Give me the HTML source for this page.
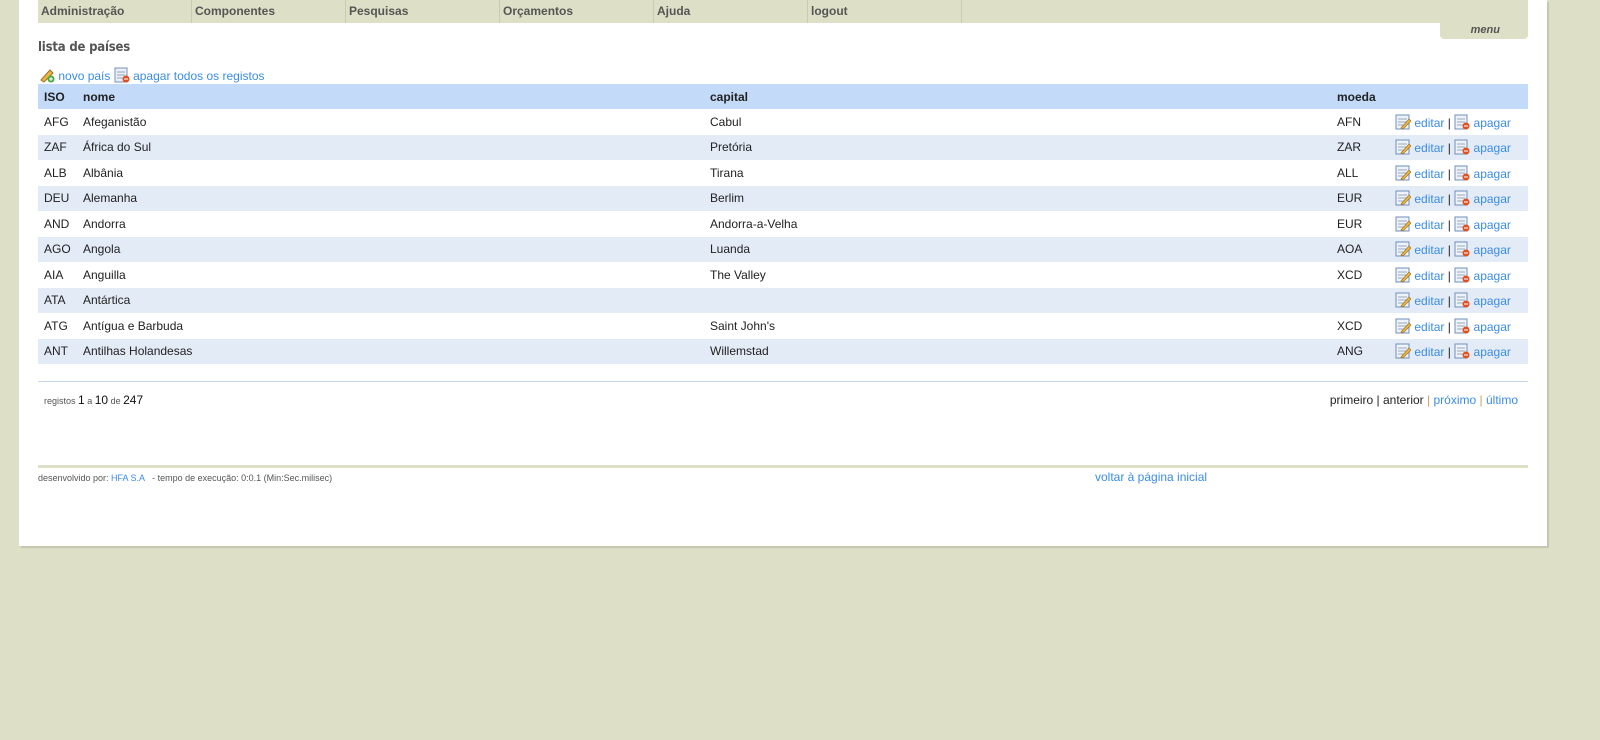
<!DOCTYPE html>
<html><head><meta charset="utf-8"><style>
*{margin:0;padding:0;box-sizing:border-box}
body{width:1600px;height:740px;background:#dde0c6;font-family:"Liberation Sans",Arial,sans-serif;font-size:12px;color:#222;position:relative;overflow:hidden}
.panel{position:absolute;left:19px;top:0;width:1528px;height:546px;background:#fff;box-shadow:2px 2px 1px #c3c6ad}
.menu{position:absolute;left:38px;top:0;width:1490px;height:23px;background:#dde0c6}
.menu div{float:left;width:154px;height:23px;border-right:1px solid #c9ccb2;padding:4px 0 0 3px;font-weight:bold;color:#555;font-size:12px}
.tab{position:absolute;left:1440px;top:23px;width:88px;height:16px;background:#dde0c6;border-radius:0 0 4px 4px;font-style:italic;font-weight:bold;color:#555;font-size:11px;text-align:right;padding:1px 28px 0 0}
h1{position:absolute;left:38px;top:40px;font-size:13px;font-weight:bold;color:#555;font-family:"DejaVu Sans Condensed","Liberation Sans",sans-serif;letter-spacing:-0.2px}
a{color:#3a8ce8;text-decoration:none}
.tools{position:absolute;left:39px;top:67px;font-size:12px}
.ic{display:inline-block;width:16px;height:16px;vertical-align:-3px}
table{position:absolute;left:38px;top:84px;width:1490px;border-collapse:collapse}
td,th{height:25.5px;padding:0 0 0 6px;text-align:left;font-size:12px;vertical-align:middle}
th{background:#c4daf9;font-weight:bold;color:#222;height:25px}
tr:nth-child(odd) td{background:#e3ebf7}
.sep{position:absolute;left:38px;top:381px;width:1490px;height:1px;background:#c9d7ee}
.reg{position:absolute;left:44px;top:393px;font-size:9px;color:#555}
.reg b{font-weight:normal;font-size:12px;color:#111}
.pag{position:absolute;right:82px;top:393px;font-size:12px;color:#222}
.pag span{color:#c8a060}
.fl{position:absolute;left:38px;top:465px;width:1490px;height:3px;background:#dde0c6}
.ft{position:absolute;left:38px;top:473px;font-size:9px;color:#555}
.home{position:absolute;left:1095px;top:470px;font-size:12px}
</style></head><body>
<div class="panel"></div>
<div class="menu"><div>Administração</div><div>Componentes</div><div>Pesquisas</div><div>Orçamentos</div><div>Ajuda</div><div>logout</div></div>
<div class="tab">menu</div>
<h1>lista de países</h1>
<div class="tools"><svg class="ic" viewBox="0 0 16 16"><path d="M2 13 L11 3 L14 6 L5 15 Z" fill="#e8b848" stroke="#a07020"/><circle cx="12" cy="12" r="3.5" fill="#4a4"/><path d="M10 12h4M12 10v4" stroke="#fff"/></svg> <a>novo país</a> <svg class="ic" viewBox="0 0 16 16"><rect x="1" y="1" width="12" height="14" fill="#eef" stroke="#7890b0"/><path d="M3 5h8M3 8h8M3 11h6" stroke="#8aa"/><circle cx="12" cy="12" r="3.5" fill="#e05020"/><path d="M10 12h4" stroke="#fff"/></svg> <a>apagar todos os registos</a></div>
<table>
<tr><th style="width:39px">ISO</th><th style="width:627px">nome</th><th style="width:627px">capital</th><th style="width:60px">moeda</th><th></th></tr>
<tr><td>AFG</td><td>Afeganistão</td><td>Cabul</td><td>AFN</td><td class="a"></td></tr>
<tr><td>ZAF</td><td>África do Sul</td><td>Pretória</td><td>ZAR</td><td class="a"></td></tr>
<tr><td>ALB</td><td>Albânia</td><td>Tirana</td><td>ALL</td><td class="a"></td></tr>
<tr><td>DEU</td><td>Alemanha</td><td>Berlim</td><td>EUR</td><td class="a"></td></tr>
<tr><td>AND</td><td>Andorra</td><td>Andorra-a-Velha</td><td>EUR</td><td class="a"></td></tr>
<tr><td>AGO</td><td>Angola</td><td>Luanda</td><td>AOA</td><td class="a"></td></tr>
<tr><td>AIA</td><td>Anguilla</td><td>The Valley</td><td>XCD</td><td class="a"></td></tr>
<tr><td>ATA</td><td>Antártica</td><td></td><td></td><td class="a"></td></tr>
<tr><td>ATG</td><td>Antígua e Barbuda</td><td>Saint John's</td><td>XCD</td><td class="a"></td></tr>
<tr><td>ANT</td><td>Antilhas Holandesas</td><td>Willemstad</td><td>ANG</td><td class="a"></td></tr>
</table>
<div class="sep"></div>
<div class="reg">registos <b>1</b> a <b>10</b> de <b>247</b></div>
<div class="pag">primeiro | anterior <span>|</span> <a>próximo</a> <span>|</span> <a>último</a></div>
<div class="fl"></div>
<div class="ft">desenvolvido por: <a>HFA S.A</a> &nbsp; - tempo de execução: 0:0.1 (Min:Sec.milisec)</div>
<a class="home">voltar à página inicial</a>
<script>
var h='<svg class="ic" viewBox="0 0 16 16"><rect x="1" y="1" width="13" height="14" fill="#eef3fb" stroke="#6f8fb8"/><path d="M3 5h9M3 8h9M3 11h7" stroke="#9ab"/><path d="M6 14 L14 5 L16 7 L8 15 Z" fill="#e8b848" stroke="#a07020" stroke-width=".7"/></svg> <a>editar</a> | <svg class="ic" viewBox="0 0 16 16"><rect x="1" y="1" width="12" height="14" fill="#eef3fb" stroke="#6f8fb8"/><path d="M3 5h8M3 8h8M3 11h6" stroke="#9ab"/><circle cx="12" cy="12" r="3.5" fill="#e05020"/><path d="M10 12h4" stroke="#fff"/></svg> <a>apagar</a>';
document.querySelectorAll('td.a').forEach(function(e){e.innerHTML=h;e.style.paddingLeft='4px'});
</script>
</body></html>
